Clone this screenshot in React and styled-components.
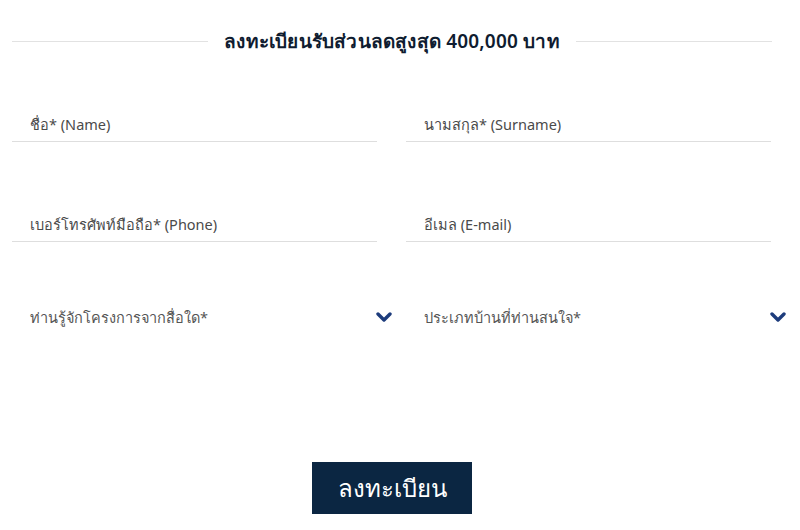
import styled, { createGlobalStyle } from 'styled-components'

const GlobalStyle = createGlobalStyle`
  body {
    margin: 0;
    background: #fff;
    font-family: "Noto Sans", "Open Sans", sans-serif;
  }
`

const Page = styled.div`
  width: 800px;
  padding: 27px 28px 0 12px;
  box-sizing: border-box;
`

const Heading = styled.div`
  display: flex;
  align-items: center;
  gap: 16px;
  width: 760px;
  height: 28px;
`

const Rule = styled.div`
  flex: 1;
  height: 1px;
  background: #e2e2e2;
`

const Title = styled.h2`
  margin: 0;
  font-size: 19px;
  font-weight: 600;
  color: #0f1c30;
  white-space: nowrap;
  letter-spacing: 0.2px;
`

const Grid = styled.div`
  display: grid;
  grid-template-columns: 365px 365px;
  column-gap: 29px;
  margin-top: 43px;
`

const Field = styled.div`
  height: ${(p) => p.$h}px;
  display: flex;
  align-items: flex-start;
`

const Input = styled.div`
  flex: 1;
  height: 44px;
  display: flex;
  align-items: center;
  padding: 10px 0 0 18px;
  box-sizing: border-box;
  border-bottom: 1px solid #dedede;
  font-size: 14.5px;
  color: #4a4a4a;
`

const Select = styled.div`
  flex: 1;
  height: 44px;
  display: flex;
  align-items: center;
  justify-content: space-between;
  padding-left: 18px;
  margin-right: -15px;
  font-size: 14.5px;
  color: #555;
`

const Chevron = () => (
  <svg width="16" height="11" viewBox="0 0 16 11">
    <path d="M2 2 L8 8 L14 2" fill="none" stroke="#1d3c7c" strokeWidth="3.4" strokeLinecap="round" strokeLinejoin="round" />
  </svg>
)

const Actions = styled.div`
  display: flex;
  justify-content: center;
  width: 760px;
  margin-top: 107px;
`

const SubmitButton = styled.button`
  width: 160px;
  height: 52px;
  border: none;
  background: #0b2642;
  color: #fff;
  font-family: inherit;
  font-size: 24px;
  cursor: pointer;
`

export default function App() {
  return (
    <Page>
      <GlobalStyle />
      <Heading>
        <Rule />
        <Title>ลงทะเบียนรับส่วนลดสูงสุด 400,000 บาท</Title>
        <Rule />
      </Heading>
      <Grid>
        <Field $h={100}><Input>ชื่อ* (Name)</Input></Field>
        <Field $h={100}><Input>นามสกุล* (Surname)</Input></Field>
        <Field $h={97}><Input>เบอร์โทรศัพท์มือถือ* (Phone)</Input></Field>
        <Field $h={97}><Input>อีเมล (E-mail)</Input></Field>
        <Field $h={60}>
          <Select>ท่านรู้จักโครงการจากสื่อใด* <Chevron /></Select>
        </Field>
        <Field $h={60}>
          <Select>ประเภทบ้านที่ท่านสนใจ* <Chevron /></Select>
        </Field>
      </Grid>
      <Actions>
        <SubmitButton>ลงทะเบียน</SubmitButton>
      </Actions>
    </Page>
  )
}
